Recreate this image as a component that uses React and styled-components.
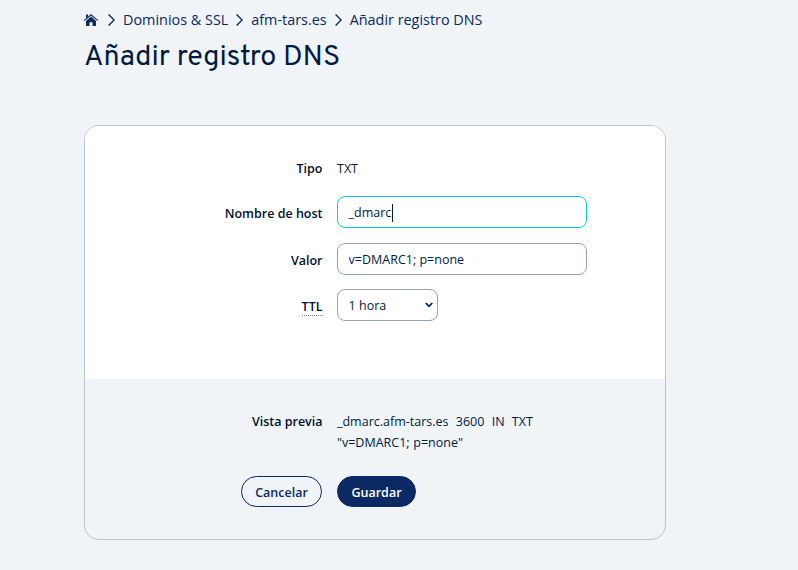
import React from "react";
import styled, { createGlobalStyle } from "styled-components";

const Global = createGlobalStyle`
  * { box-sizing: border-box; }
  html { background: #f0f4f7; }
  body {
    margin: 0;
    background: #f0f4f7;
    color: #001b41;
    font-family: "Open Sans", "Noto Sans", sans-serif;
    font-size: 12.5px;
    line-height: 21px;
    overflow: hidden;
  }
`;

const Page = styled.main`
  width: 582px;
  height: 570px;
  margin-left: 84px;
  padding-top: 9px;
`;

const Breadcrumb = styled.nav`
  display: flex;
  align-items: center;
  height: 22px;
  font-size: 14.4px;
  line-height: 20px;
  color: #0b2a63;
  white-space: nowrap;
`;

const Crumb = styled.a`
  color: inherit;
  text-decoration: none;
  cursor: pointer;
`;

const HomeSvg = styled.svg`
  display: block;
  width: 14px;
  height: 14px;
  margin-right: 2px;
`;

const SeparatorSvg = styled.svg`
  flex: none;
  width: 7px;
  height: 12px;
  margin: 0 8px;
`;

const Title = styled.h1`
  margin: 7px 0 0;
  height: 40px;
  font-family: Overpass, Roboto, sans-serif;
  font-size: 28.8px;
  font-weight: 400;
  line-height: 40px;
  white-space: nowrap;
`;

const Card = styled.form`
  margin: 47px 0 0;
  height: 415px;
  border: 1px solid #b8c4d1;
  border-radius: 15px;
  overflow: hidden;
`;

const Fields = styled.section`
  height: 253px;
  padding-top: 32px;
  background: #fff;
`;

const Summary = styled.section`
  padding-top: 32px;
`;

const Row = styled.div`
  display: grid;
  grid-template-columns: 237.5px 1fr;
  column-gap: 14.5px;
  align-items: start;
  margin-bottom: ${(p) => p.$gap || 0}px;
`;

const Label = styled.label`
  justify-self: end;
  margin-top: ${(p) => p.$offset || 0}px;
  font-weight: 600;
  color: #02102b;
`;

const Hint = styled.abbr`
  display: block;
  height: 20px;
  border-bottom: 1px dotted #718095;
  text-decoration: none;
`;

const Preview = styled.div`
  white-space: pre-wrap;
  word-spacing: 0.4px;
`;

const Input = styled.input`
  width: 250px;
  height: 32px;
  padding: 1px 10.6px 0;
  border: 1px solid #97a3b4;
  border-radius: 8px;
  outline: none;
  background: #fff;
  color: #001b41;
  font: inherit;
`;

const ActiveInput = styled.div`
  display: flex;
  align-items: center;
  width: 250px;
  height: 32px;
  padding: 1px 10.6px 0;
  border: 1px solid #11c7e6;
  border-radius: 8px;
  background: #fff;
`;

const Caret = styled.span`
  width: 1px;
  height: 18px;
  margin-left: 0.6px;
  background: #001b41;
`;

const Select = styled.div`
  display: flex;
  align-items: center;
  justify-content: space-between;
  width: 101px;
  height: 32px;
  padding: 0 4px 0 10.6px;
  border: 1px solid #97a3b4;
  border-radius: 8px;
`;

const ArrowSvg = styled.svg`
  width: 8px;
  height: 6px;
`;

const Actions = styled.div`
  display: flex;
  gap: 15px;
  margin: 23px 0 0 156px;
`;

const Button = styled.button`
  width: ${(p) => p.$width}px;
  height: 31px;
  padding: 1px 0 0;
  border: 1px solid #0b2a63;
  border-radius: 16px;
  background: ${(p) => (p.$primary ? "#0b2a63" : "transparent")};
  color: ${(p) => (p.$primary ? "#fff" : "#0b2a63")};
  font: inherit;
  font-weight: 600;
`;

const HomeIcon = () => (
  <HomeSvg viewBox="0 0 14 14" fill="#0b2a63">
    <path d="M7 3.6 12 7.9V12.6Q12 13 11.6 13H8.5V9.2H5.5V13H2.4Q2 13 2 12.6V7.9Z" />
    <path d="M2 5.3V1.6H4V3.6Z" />
    <path d="M.7 7.1 7 1.7 13.3 7.1" fill="none" stroke="#0b2a63" strokeWidth="1.2" strokeLinecap="round" />
  </HomeSvg>
);

const Separator = () => (
  <SeparatorSvg viewBox="0 0 7 12" fill="none" stroke="#0b2a63" strokeWidth="1.4">
    <path d="M.6.5 6.1 6 .6 11.5" />
  </SeparatorSvg>
);

export default function App() {
  return (
    <Page>
      <Global />
      <Breadcrumb>
        <Crumb aria-label="Inicio"><HomeIcon /></Crumb>
        <Separator />
        <Crumb>Dominios &amp; SSL</Crumb>
        <Separator />
        <Crumb>afm-tars.es</Crumb>
        <Separator />
        <Crumb>Añadir registro DNS</Crumb>
      </Breadcrumb>
      <Title>Añadir registro DNS</Title>
      <Card>
        <Fields>
          <Row $gap={17}>
            <Label>Tipo</Label>
            <span>TXT</span>
          </Row>
          <Row $gap={15}>
            <Label $offset={7}>Nombre de host</Label>
            <ActiveInput>_dmarc<Caret /></ActiveInput>
          </Row>
          <Row $gap={14}>
            <Label $offset={7}>Valor</Label>
            <Input defaultValue="v=DMARC1; p=none" />
          </Row>
          <Row>
            <Label $offset={7}><Hint>TTL</Hint></Label>
            <Select>
              1 hora
              <ArrowSvg viewBox="0 0 8 6" fill="none" stroke="#001b41" strokeWidth="1.7">
                <path d="M.7 1 4 4.3 7.3 1" />
              </ArrowSvg>
            </Select>
          </Row>
        </Fields>
        <Summary>
          <Row>
            <Label>Vista previa</Label>
            <Preview>{'_dmarc.afm-tars.es  3600  IN  TXT\n"v=DMARC1; p=none"'}</Preview>
          </Row>
          <Actions>
            <Button type="button" $width={81}>Cancelar</Button>
            <Button type="button" $width={79} $primary>Guardar</Button>
          </Actions>
        </Summary>
      </Card>
    </Page>
  );
}
